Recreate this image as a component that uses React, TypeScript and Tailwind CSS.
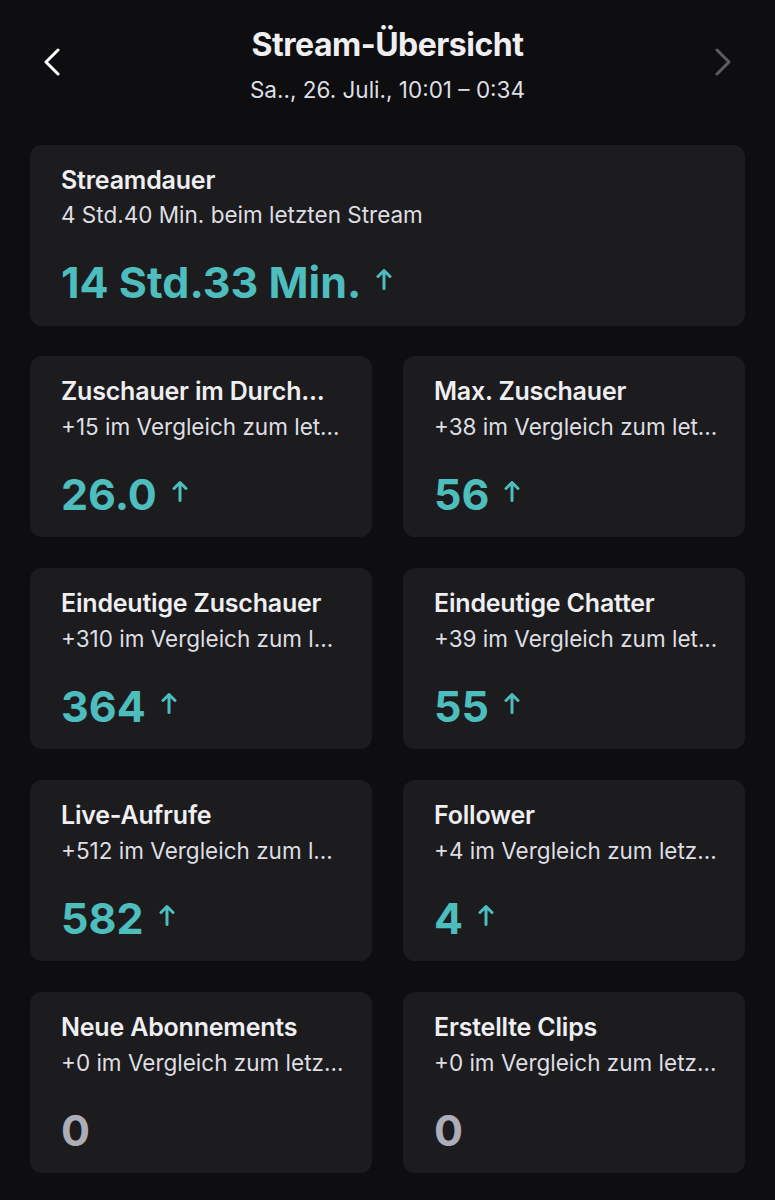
import React from 'react';

type Stat = {
  title: string;
  sub: string;
  value: string;
  up: boolean;
};

const stats: Stat[] = [
  { title: 'Zuschauer im Durch...', sub: '+15 im Vergleich zum let...', value: '26.0', up: true },
  { title: 'Max. Zuschauer', sub: '+38 im Vergleich zum let...', value: '56', up: true },
  { title: 'Eindeutige Zuschauer', sub: '+310 im Vergleich zum l...', value: '364', up: true },
  { title: 'Eindeutige Chatter', sub: '+39 im Vergleich zum let...', value: '55', up: true },
  { title: 'Live-Aufrufe', sub: '+512 im Vergleich zum l...', value: '582', up: true },
  { title: 'Follower', sub: '+4 im Vergleich zum letz...', value: '4', up: true },
  { title: 'Neue Abonnements', sub: '+0 im Vergleich zum letz...', value: '0', up: false },
  { title: 'Erstellte Clips', sub: '+0 im Vergleich zum letz...', value: '0', up: false },
];

function UpArrow() {
  return (
    <svg width="16" height="22" viewBox="0 0 16 22" fill="none" className="shrink-0 -translate-y-[3px]">
      <path d="M8 20.5V2.5M2 8.5L8 2.5L14 8.5" stroke="#4dbdbd" strokeWidth="3" strokeLinecap="round" strokeLinejoin="round" />
    </svg>
  );
}

function Card({ title, sub, value, up }: Stat) {
  return (
    <div className="flex h-[181px] flex-col overflow-hidden rounded-[12px] bg-[#1c1c1f] px-[31px] pt-[20px]">
      <div className="whitespace-nowrap text-[25px] font-semibold leading-[30px] tracking-[-0.2px] text-[#efeff1]">{title}</div>
      <div className="mt-[7px] whitespace-nowrap text-[22.5px] leading-[28px] text-[#dedee3]">{sub}</div>
      <div className="mt-[28px] flex items-center gap-[15px]">
        <span className={`text-[43px] font-bold leading-[50px] ${up ? 'text-[#4dbdbd]' : 'text-[#adadb8]'}`}>
          {value}
        </span>
        {up && <UpArrow />}
      </div>
    </div>
  );
}

export default function App() {
  return (
    <div
      className="min-h-[1200px] w-[775px] bg-[#0e0e10] px-[30px] pb-[30px]"
      style={{ fontFamily: 'Inter, "Noto Sans", sans-serif' }}
    >
      <div className="flex items-start justify-between pt-[26px]">
        <div className="pl-[12px] pt-[22px]">
          <svg width="20" height="28" viewBox="0 0 20 28" fill="none">
            <path d="M16 2L4 14L16 26" stroke="#ffffff" strokeWidth="3" strokeLinecap="round" strokeLinejoin="round" />
          </svg>
        </div>
        <div className="flex flex-col items-center">
          <div className="text-[32px] font-bold leading-[38px] tracking-[-0.5px] text-[#efeff1]">Stream-Übersicht</div>
          <div className="mt-[12px] text-[22.5px] leading-[28px] text-[#dedee3]">Sa.., 26. Juli., 10:01 – 0:34</div>
        </div>
        <div className="pr-[12px] pt-[22px]">
          <svg width="20" height="28" viewBox="0 0 20 28" fill="none">
            <path d="M4 2L16 14L4 26" stroke="#5c5c63" strokeWidth="3" strokeLinecap="round" strokeLinejoin="round" />
          </svg>
        </div>
      </div>

      <div className="mt-[41px] flex h-[181px] flex-col rounded-[12px] bg-[#1c1c1f] px-[31px] pt-[20px]">
        <div className="text-[25px] font-semibold leading-[30px] tracking-[-0.2px] text-[#efeff1]">Streamdauer</div>
        <div className="mt-[6px] text-[22.5px] leading-[28px] text-[#dedee3]">4 Std.40 Min. beim letzten Stream</div>
        <div className="mt-[28px] flex items-center gap-[15px]">
          <span className="text-[43px] font-bold leading-[50px] text-[#4dbdbd]">14 Std.33 Min.</span>
          <UpArrow />
        </div>
      </div>

      <div className="mt-[30px] grid grid-cols-2 gap-x-[31px] gap-y-[31px]">
        {stats.map((s) => (
          <Card key={s.title} {...s} />
        ))}
      </div>
    </div>
  );
}
